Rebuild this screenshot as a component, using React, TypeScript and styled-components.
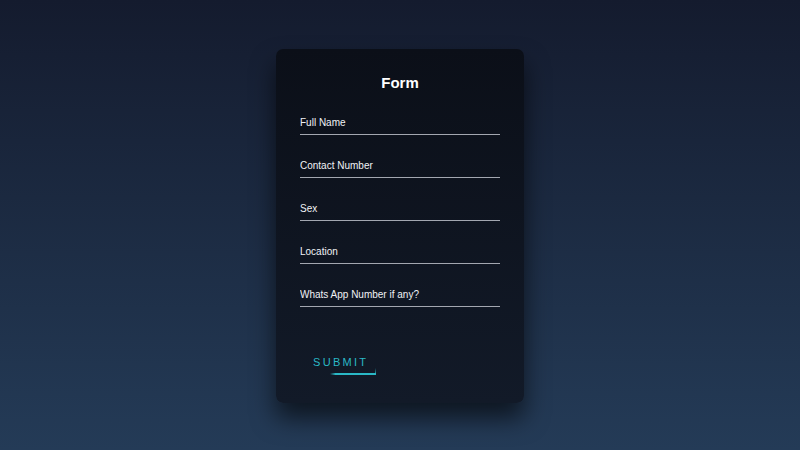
import React from 'react';
import styled, { createGlobalStyle } from 'styled-components';

const GlobalStyle = createGlobalStyle`
  html, body {
    margin: 0;
    padding: 0;
    height: 100%;
  }
  body {
    font-family: "Liberation Sans", Arial, sans-serif;
    background: linear-gradient(#141b2e, #243b57);
  }
  #root {
    height: 100%;
  }
`;

const Page = styled.div`
  height: 450px;
  display: flex;
  align-items: flex-start;
  justify-content: center;
  padding-top: 49px;
  box-sizing: border-box;
`;

const Card = styled.form`
  width: 248px;
  box-sizing: border-box;
  padding: 24px 24px 28px;
  border-radius: 7px;
  background: linear-gradient(#0b0f18, #121a28);
  box-shadow: 0 15px 25px rgba(0, 0, 0, 0.6);
`;

const Title = styled.h2`
  margin: 0 0 19px;
  font-size: 15px;
  line-height: 19px;
  font-weight: 700;
  color: #ffffff;
  text-align: center;
`;

const Field = styled.div`
  margin-bottom: 19px;
`;

const Input = styled.input`
  display: block;
  width: 100%;
  box-sizing: border-box;
  height: 24px;
  padding: 0;
  border: none;
  border-bottom: 1.5px solid #a3a7b0;
  background: transparent;
  outline: none;
  font-family: inherit;
  font-size: 10px;
  color: #ffffff;

  &::placeholder {
    color: #f0f2f5;
    opacity: 1;
  }
`;

const Submit = styled.button`
  position: relative;
  margin-top: 23px;
  padding: 7px 8px 7px 13px;
  border: none;
  background: transparent;
  font-family: "Liberation Sans", Arial, sans-serif;
  font-size: 11px;
  line-height: 12px;
  letter-spacing: 2.3px;
  color: #2ab8c6;
  cursor: pointer;

  &::before {
    content: '';
    position: absolute;
    right: 0;
    bottom: 0;
    width: 46px;
    height: 2px;
    background: linear-gradient(90deg, transparent, #2ab8c6 12%, #2ab8c6);
  }

  &::after {
    content: '';
    position: absolute;
    right: 0;
    bottom: 0;
    width: 1px;
    height: 7px;
    background: linear-gradient(transparent, #2ab8c6);
  }
`;

const fields = ['Full Name', 'Contact Number', 'Sex', 'Location', 'Whats App Number if any?'];

export default function App() {
  return (
    <>
      <GlobalStyle />
      <Page>
        <Card onSubmit={(e) => e.preventDefault()}>
          <Title>Form</Title>
          {fields.map((f) => (
            <Field key={f}>
              <Input type="text" placeholder={f} />
            </Field>
          ))}
          <Submit type="submit">SUBMIT</Submit>
        </Card>
      </Page>
    </>
  );
}
